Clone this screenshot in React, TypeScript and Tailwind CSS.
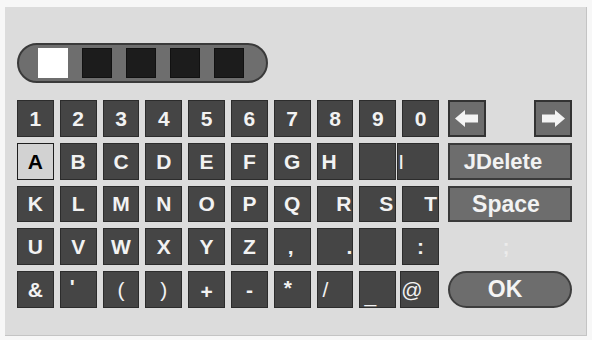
import { FC } from 'react';

type KeyDef = { label: string; align?: string };

// per-key label placement follows the reference (several labels sit off-centre)
const rows: KeyDef[][] = [
  [{ label: '1' }, { label: '2' }, { label: '3' }, { label: '4' }, { label: '5' }, { label: '6' }, { label: '7' }, { label: '8' }, { label: '9' }, { label: '0' }],
  [
    { label: 'A' }, { label: 'B' }, { label: 'C' }, { label: 'D' }, { label: 'E' }, { label: 'F' }, { label: 'G' },
    { label: 'H', align: 'justify-start items-center pl-[4px]' },
    { label: '' },
    { label: 'I', align: 'justify-start items-center -ml-[5px] font-normal' },
  ],
  [
    { label: 'K' }, { label: 'L' }, { label: 'M' }, { label: 'N' }, { label: 'O' }, { label: 'P' }, { label: 'Q' },
    { label: 'R', align: 'justify-end items-center pr-[1px]' },
    { label: 'S', align: 'justify-end items-center pr-[2px]' },
    { label: 'T', align: 'justify-end items-center pr-[1px]' },
  ],
  [
    { label: 'U' }, { label: 'V' }, { label: 'W' }, { label: 'X' }, { label: 'Y' }, { label: 'Z' },
    { label: ',', align: 'justify-start items-center pl-[13px]' },
    { label: '.', align: 'justify-end items-center pr-0' },
    { label: '' },
    { label: ':' },
  ],
  [
    { label: '&' },
    { label: "'", align: 'justify-start items-start pl-[9px] pt-[4px]' },
    { label: '(', align: 'justify-center items-center font-normal' },
    { label: ')', align: 'justify-center items-center font-normal' },
    { label: '+', align: 'justify-center items-end pb-[5px]' },
    { label: '-' },
    { label: '*', align: 'justify-start items-start pt-[5px] pl-[9px]' },
    { label: '/', align: 'justify-start items-center pl-[5px] font-normal' },
    { label: '_', align: 'justify-start items-end pl-[4px] pb-[2px] font-normal' },
    { label: '@', align: 'justify-start items-center -ml-[2px] font-normal' },
  ],
];

const Key: FC<{ k: KeyDef; selected?: boolean }> = ({ k, selected }) => (
  <div
    className={`flex ${k.align ?? 'justify-center items-center'} border ${
      selected ? 'bg-[#d2d2d2] border-[#1e1e1e] text-black' : 'bg-[#454545] border-[#2c2c2c] text-[#f2f2f2]'
    } text-[21px] font-bold leading-none`}
  >
    {k.label}
  </div>
);

const Arrow: FC<{ dir: 'left' | 'right' }> = ({ dir }) => (
  <div className="w-[38px] h-full flex items-center justify-center bg-[#6d6d6d] border-2 border-[#333]">
    <svg width="24" height="17" viewBox="0 0 24 17" className={dir === 'right' ? 'scale-x-[-1]' : ''}>
      <polygon points="0,8.5 10,0 10,4.5 23,4.5 23,12.5 10,12.5 10,17" fill="#f4f4f4" />
    </svg>
  </div>
);

export default function App() {
  return (
    <div className="w-[592px] h-[340px] bg-[#f7f7f7] pl-[5px] pt-[7px]" style={{ fontFamily: '"Liberation Sans", Arial, sans-serif' }}>
      <div className="w-[582px] h-[329px] bg-[#dcdcdc] border-r border-b border-[#c4c4c4] pl-[12px] pt-[36px] flex flex-col">
        {/* entry field */}
        <div className="w-[251px] h-[40px] rounded-full bg-[#6e6e6e] border-2 border-[#3a3a3a] flex items-center pl-[19px] gap-[14px]">
          <div className="w-[30px] h-[30px] bg-white" />
          <div className="w-[30px] h-[30px] bg-[#1c1c1c] border border-[#111]" />
          <div className="w-[30px] h-[30px] bg-[#1c1c1c] border border-[#111]" />
          <div className="w-[30px] h-[30px] bg-[#1c1c1c] border border-[#111]" />
          <div className="w-[30px] h-[30px] bg-[#1c1c1c] border border-[#111]" />
        </div>

        <div className="flex mt-[17px] gap-[9px]">
          <div className="grid grid-cols-10 grid-rows-5 gap-[6px] w-[422px] h-[208px]">
            {rows.map((row, r) =>
              row.map((k, c) => <Key key={`${r}-${c}`} k={k} selected={r === 1 && c === 0} />)
            )}
          </div>

          <div className="grid grid-rows-5 gap-[6px] w-[124px] h-[208px]">
            <div className="flex justify-between">
              <Arrow dir="left" />
              <Arrow dir="right" />
            </div>
            <div className="flex items-center justify-center pr-[14px] bg-[#6d6d6d] border-2 border-[#3a3a3a] text-[#f2f2f2] text-[22px] font-bold">
              JDelete
            </div>
            <div className="flex items-center justify-center pr-[8px] bg-[#6d6d6d] border-2 border-[#3a3a3a] text-[#f2f2f2] text-[23px] font-bold">
              Space
            </div>
            <div className="flex items-center justify-center pr-[8px] text-[#ececec] text-[20px] font-bold">;</div>
            <div className="flex items-center justify-center pr-[10px] rounded-full bg-[#6d6d6d] border-2 border-[#3e3e3e] text-[#f4f4f4] text-[23px] font-bold">
              OK
            </div>
          </div>
        </div>
      </div>
    </div>
  );
}
